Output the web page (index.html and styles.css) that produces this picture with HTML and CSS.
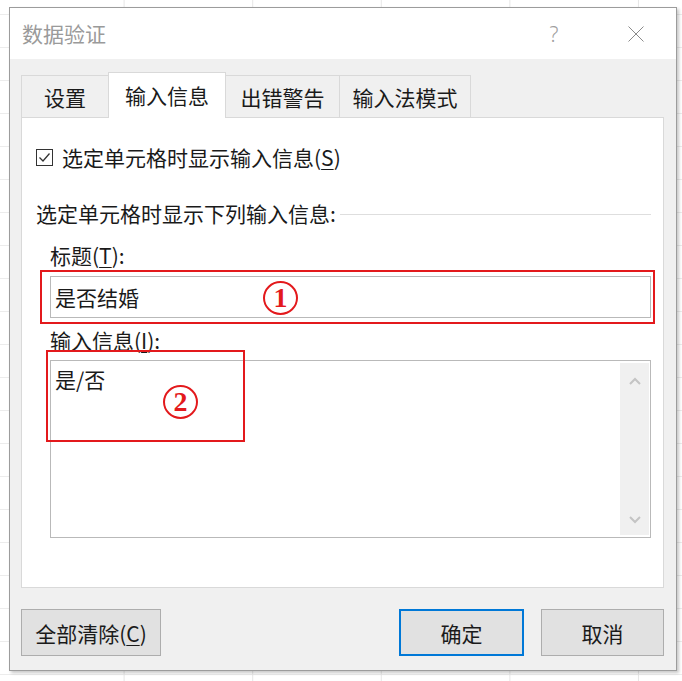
FILE: index.html
```html
<!DOCTYPE html>
<html lang="zh-CN">
<head>
<meta charset="utf-8">
<title>数据验证</title>
<link rel="stylesheet" href="styles.css">
</head>
<body>
<div class="dialog">
  <div class="titlebar">
    <span class="title">数据验证</span>
    <span class="help">?</span>
    <span class="close">
      <svg width="16" height="16" viewBox="0 0 16 16"><path d="M0.5 0.5 L15.5 15.5 M15.5 0.5 L0.5 15.5" stroke="#8a8a8a" stroke-width="1" fill="none"/></svg>
    </span>
  </div>
  <div class="body">
    <div class="tabs">
      <div class="tab first">设置</div>
      <div class="tab active">输入信息</div>
      <div class="tab">出错警告</div>
      <div class="tab last">输入法模式</div>
    </div>
    <div class="panel">
      <div class="check-row">
        <span class="checkbox">
          <svg width="17" height="17" viewBox="0 0 17 17"><rect x="0.5" y="0.5" width="16" height="16" fill="#fff" stroke="#333" stroke-width="1"/><path d="M3.5 8.5 L7 12 L13.5 4.5" stroke="#333" stroke-width="1.3" fill="none"/></svg>
        </span>
        <span>选定单元格时显示输入信息(<u>S</u>)</span>
      </div>
      <div class="group">
        <span>选定单元格时显示下列输入信息:</span>
        <span class="rule"></span>
      </div>
      <div class="fields">
        <div class="label">标题(<u>T</u>):</div>
        <div class="input">是否结婚</div>
        <div class="label label2">输入信息(<u>I</u>):</div>
        <div class="textarea">
          <div class="ta-text">是/否</div>
          <div class="scrollbar">
            <svg width="12" height="8" viewBox="0 0 12 8"><path d="M1 7 L6 2 L11 7" stroke="#c4c4c4" stroke-width="2" fill="none"/></svg>
            <svg width="12" height="8" viewBox="0 0 12 8"><path d="M1 1 L6 6 L11 1" stroke="#c4c4c4" stroke-width="2" fill="none"/></svg>
          </div>
        </div>
      </div>
      <div class="mark mark1"></div>
      <div class="mark mark2"></div>
      <span class="num num1">1</span>
      <span class="num num2">2</span>
    </div>
    <div class="footer">
      <button class="btn btn-clear">全部清除(<u>C</u>)</button>
      <div class="btn-group">
        <button class="btn btn-ok">确定</button>
        <button class="btn btn-cancel">取消</button>
      </div>
    </div>
  </div>
</div>
</body>
</html>
```
FILE: styles.css
```css
* { box-sizing: border-box; }
html, body { margin: 0; padding: 0; }
body {
  width: 682px;
  height: 681px;
  overflow: hidden;
  font-family: "Noto Sans CJK SC", "Noto Sans", sans-serif;
  font-size: 21px;
  color: #1a1a1a;
  background-color: #fff;
  background-image:
    linear-gradient(to right, #e6e6e6 1px, transparent 1px),
    linear-gradient(to bottom, #ececec 1px, transparent 1px);
  background-size: 128.6px 100%, 100% 33px;
  background-position: -5px 0, 0 14px;
  padding-top: 7px;
  padding-left: 9px;
}
u { text-decoration: underline; text-underline-offset: 3px; text-decoration-thickness: 1px; }

.dialog {
  width: 668px;
  height: 664px;
  border: 1px solid #9c9c9c;
  background: #f0f0f0;
  box-shadow: 2px 2px 3px rgba(0,0,0,0.22);
  display: flex;
  flex-direction: column;
}

.titlebar {
  height: 51px;
  background: #fff;
  display: flex;
  align-items: center;
  padding-left: 12px;
  flex: none;
}
.title { color: #9a9a9a; line-height: 51px; flex: 1; }
.help {
  font-family: "Noto Sans", sans-serif;
  font-weight: 300;
  color: #a0a0a0;
  font-size: 21px;
  width: 20px;
  text-align: center;
  margin-right: 64px;
}
.close { width: 16px; height: 16px; margin-right: 32px; display: flex; }

.body {
  flex: 1;
  padding: 16px 12px 14px 11px;
  display: flex;
  flex-direction: column;
}

.tabs {
  display: flex;
  align-items: flex-end;
  height: 42px;
  position: relative;
  z-index: 2;
}
.tab {
  height: 42px;
  line-height: 43px;
  padding: 0 13.5px;
  border: 1px solid #d9d9d9;
  border-bottom: none;
  border-right: none;
  background: #f0f0f0;
  text-align: center;
  white-space: nowrap;
}
.tab.first { width: 87px; padding: 0; }
.tab.last { border-right: 1px solid #d9d9d9; width: 132px; padding: 0; }
.tab.active {
  height: 46px;
  margin-bottom: -1px;
  line-height: 44px;
  width: 118px;
  padding: 0;
  background: #fff;
  border-right: 1px solid #d9d9d9;
}
.tab.active + .tab { border-left: none; width: 113px; padding: 0; }

.panel {
  position: relative;
  height: 471px;
  background: #fff;
  border: 1px solid #d9d9d9;
  padding: 25px 12px 0 14px;
  flex: none;
}

.check-row {
  display: flex;
  align-items: center;
  height: 28px;
  line-height: 28px;
}
.checkbox { width: 17px; height: 17px; margin-right: 9px; display: flex; }

.group {
  margin-top: 28px;
  display: flex;
  align-items: center;
  height: 28px;
  line-height: 28px;
}
.rule { flex: 1; height: 1px; background: #dedede; margin-left: 4px; margin-top: 2px; }

.fields { padding-left: 14px; }
.label { margin-top: 14px; height: 28px; line-height: 28px; }
.label2 { margin-top: 8px; }

.input {
  margin-top: 7px;
  height: 42px;
  border: 1px solid #b9b9b9;
  line-height: 40px;
  padding-left: 4px;
}

.textarea {
  margin-top: 6px;
  height: 178px;
  border: 1px solid #b9b9b9;
  display: flex;
  padding: 2px 1px 2px 0;
}
.ta-text { flex: 1; padding: 2px 0 0 4px; line-height: 28px; }
.scrollbar {
  width: 29px;
  background: #f0f0f0;
  display: flex;
  flex-direction: column;
  align-items: center;
  justify-content: space-between;
  padding: 14px 0 11px;
}

.mark {
  position: absolute;
  border: 2px solid #e3191c;
}
.mark1 { left: 18px; top: 152px; width: 615px; height: 54px; }
.mark2 { left: 24px; top: 232px; width: 199px; height: 92px; }

.num {
  position: absolute;
  width: 35px;
  height: 34px;
  border: 2.6px solid #e3191c;
  border-radius: 50%;
  color: #e3191c;
  font-family: "Liberation Serif", serif;
  font-weight: bold;
  font-size: 28px;
  line-height: 30px;
  text-align: center;
}
.num1 { left: 241px; top: 163px; }
.num2 { left: 141px; top: 267px; }

.footer {
  margin-top: 21px;
  display: flex;
  justify-content: space-between;
  height: 47px;
}
.btn {
  font-family: inherit;
  font-size: 21px;
  color: #1a1a1a;
  background: #e1e1e1;
  border: 1px solid #adadad;
  height: 47px;
  padding: 0;
  margin: 0;
  line-height: 44px;
}
.btn-clear { width: 140px; }
.btn-group { display: flex; gap: 17px; }
.btn-ok { width: 125px; border: 2px solid #0078d7; }
.btn-cancel { width: 123px; }
```
